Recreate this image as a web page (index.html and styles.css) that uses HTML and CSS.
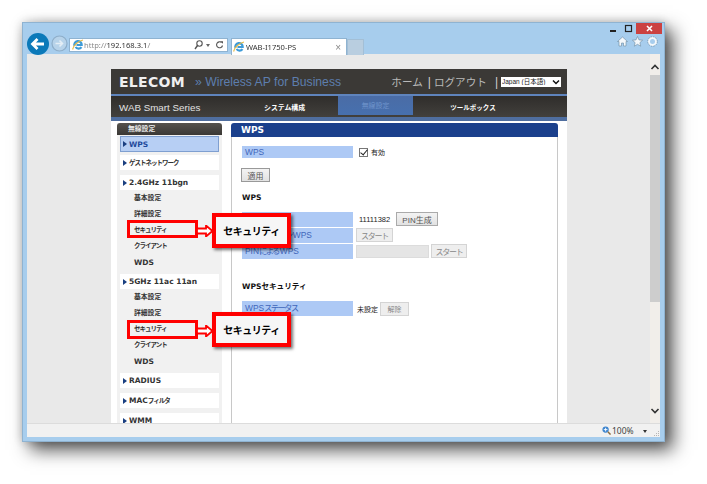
FILE: index.html
```html
<!DOCTYPE html>
<html lang="ja">
<head>
<meta charset="utf-8">
<title>WAB-I1750-PS</title>
<link rel="stylesheet" href="styles.css">
</head>
<body>
<div class="window">
  <div class="caption">
    <span class="cap-btn"><svg width="9" height="9" viewBox="0 0 9 9"><rect x="1" y="6" width="6" height="2" fill="#222"/></svg></span>
    <span class="cap-btn"><svg width="9" height="9" viewBox="0 0 9 9"><rect x="1.500" y="1.500" width="6" height="6" fill="none" stroke="#222" stroke-width="1.200"/></svg></span>
    <span class="cap-close"><svg width="9" height="9" viewBox="0 0 9 9"><path d="M2 2l5 5M7 2l-5 5" stroke="#fff" stroke-width="1.600"/></svg></span>
  </div>
  <div class="toolbar">
    <span class="back"><svg width="22" height="22" viewBox="0 0 22 22"><circle cx="11" cy="11" r="11" fill="#0b79b9"/><path d="M17 11H6M10.500 6L5.500 11l5 5" fill="none" stroke="#fff" stroke-width="2.800"/></svg></span>
    <span class="forward"><svg width="17" height="17" viewBox="0 0 17 17"><circle cx="8.500" cy="8.500" r="7.500" fill="#b7d3ea" stroke="#8eaec9" stroke-width="1.200"/><path d="M4.500 8.500h7M8.500 5.500l3 3-3 3" fill="none" stroke="#e4eef6" stroke-width="1.600"/></svg></span>
    <div class="urlbar">
      <svg class="ie" width="12" height="12" viewBox="0 0 12 12"><path d="M2.500 7a3.700 3.700 0 1 1 7.200-1H4.500M9.500 8.200A3.700 3.700 0 0 1 3.500 8" fill="none" stroke="#3d9bd8" stroke-width="2.200"/><path d="M1 10.500C0 8 6 2 11 1" fill="none" stroke="#e8b93c" stroke-width="1.200"/></svg>
      <span class="url"><span class="url-dim">http://</span>192.168.3.1<span class="url-dim">/</span></span>
      <svg class="url-tool" width="9" height="10" viewBox="0 0 9 10"><circle cx="5.500" cy="3.500" r="2.700" fill="none" stroke="#555" stroke-width="1.100"/><path d="M3.500 5.500L1 9" stroke="#555" stroke-width="1.400"/></svg>
      <span class="url-drop"></span>
      <svg class="url-tool" width="9" height="10" viewBox="0 0 9 10"><path d="M7.500 5.500a3 3 0 1 1-1-3" fill="none" stroke="#555" stroke-width="1.100"/><path d="M5 1.200h3v2.600z" fill="#555"/></svg>
    </div>
    <div class="tab">
      <svg width="12" height="12" viewBox="0 0 12 12"><path d="M2.500 7a3.700 3.700 0 1 1 7.200-1H4.500M9.500 8.200A3.700 3.700 0 0 1 3.500 8" fill="none" stroke="#3d9bd8" stroke-width="2.200"/><path d="M1 10.500C0 8 6 2 11 1" fill="none" stroke="#e8b93c" stroke-width="1.200"/></svg>
      <span class="tab-title">WAB-I1750-PS</span>
      <span class="tab-x">×</span>
    </div>
    <div class="tab-new"></div>
    <div class="tools">
      <svg width="11" height="11" viewBox="0 0 11 11"><path d="M5.500 1L.5 5.500H2V10h2.500V7h2v3H9V5.500h1.500z" fill="#f4f8fb" stroke="#6d8aa0" stroke-width=".6"/></svg>
      <svg width="11" height="11" viewBox="0 0 11 11"><path d="M5.500.5l1.500 3.400 3.600.3-2.700 2.400.8 3.600-3.200-1.900-3.200 1.900.8-3.600L.4 4.200 4 3.900z" fill="#f4f8fb" stroke="#6d8aa0" stroke-width=".6"/></svg>
      <svg width="11" height="11" viewBox="0 0 11 11"><circle cx="5.500" cy="5.500" r="3.600" fill="none" stroke="#f4f8fb" stroke-width="2.200"/><circle cx="5.500" cy="5.500" r="4.800" fill="none" stroke="#6d8aa0" stroke-width=".7" stroke-dasharray="1.500 1"/></svg>
    </div>
  </div>

  <div class="viewport">
    <div class="canvas">
      <div class="page">
        <header class="head">
          <div class="brand">
            <span class="logo">ELECOM</span>
            <span class="tagline">» Wireless AP for Business</span>
          </div>
          <div class="headlinks">
            <span>ホーム</span><span class="pipe">|</span><span>ログアウト</span><span class="pipe pipe-last">|</span>
            <span class="lang-wrap">
              <select class="lang"><option>Japan (日本語)</option></select>
              <svg class="lang-arrow" width="8" height="6" viewBox="0 0 8 6"><path d="M1 1.500l3 3 3-3" fill="none" stroke="#111" stroke-width="1.500"/></svg>
            </span>
          </div>
        </header>
        <nav class="nav">
          <span class="series">WAB Smart Series</span>
          <span class="nav-item nav-sys">システム構成</span>
          <span class="nav-item nav-active">無線設定</span>
          <span class="nav-item nav-tools">ツールボックス</span>
        </nav>
        <div class="body">
          <aside class="side">
            <div class="side-title">無線設定</div>
            <div class="side-list">
              <div class="side-row side-row-active">WPS</div>
              <div class="side-row"><span class="kana">ゲストネットワーク</span></div>
              <div class="side-group">
                <div class="side-row">2.4GHz 11bgn</div>
                <div class="sub">基本設定</div>
                <div class="sub">詳細設定</div>
                <div class="sub"><span class="kana">セキュリティ</span></div>
                <div class="sub"><span class="kana">クライアント</span></div>
                <div class="sub">WDS</div>
              </div>
              <div class="side-group">
                <div class="side-row">5GHz 11ac 11an</div>
                <div class="sub">基本設定</div>
                <div class="sub">詳細設定</div>
                <div class="sub"><span class="kana">セキュリティ</span></div>
                <div class="sub"><span class="kana">クライアント</span></div>
                <div class="sub">WDS</div>
              </div>
              <div class="side-row">RADIUS</div>
              <div class="side-row">MAC<span class="kana">フィルタ</span></div>
              <div class="side-row">WMM</div>
            </div>
          </aside>
          <main class="panel">
            <h1 class="panel-title">WPS</h1>
            <div class="panel-body">
              <div class="row">
                <span class="label label-short">WPS</span>
                <label class="check"><input type="checkbox" checked>有効</label>
              </div>
              <div class="apply"><button class="btn btn-apply">適用</button></div>
              <h2 class="section">WPS</h2>
              <div class="row row-tall">
                <span class="label">PIN<span class="label-kana">コード</span></span>
                <span class="value-pin">11111382</span>
                <button class="btn btn-pin">PIN生成</button>
              </div>
              <div class="row row-tall">
                <span class="label"><span class="label-kana">プッシュボタン</span>WPS</span>
                <button class="btn btn-off btn-start">スタート</button>
              </div>
              <div class="row row-tall">
                <span class="label">PIN<span class="label-kana">による</span>WPS</span>
                <span class="pin-input"></span>
                <button class="btn btn-off btn-start2">スタート</button>
              </div>
              <h2 class="section section-sec">WPSセキュリティ</h2>
              <div class="row row-status">
                <span class="label">WPS<span class="label-kana">ステータス</span></span>
                <span class="value-status">未設定</span>
                <button class="btn btn-off btn-clear">解除</button>
              </div>
            </div>
          </main>
        </div>
      </div>
    </div>
    <div class="scrollbar">
      <svg class="sb-arrow" width="10" height="9" viewBox="0 0 10 9"><path d="M1.500 6l3.500-3.500L8.500 6" fill="none" stroke="#333" stroke-width="1.600"/></svg>
      <div class="sb-track"><div class="sb-thumb"></div></div>
      <svg class="sb-arrow" width="10" height="9" viewBox="0 0 10 9"><path d="M1.500 3l3.500 3.500L8.500 3" fill="none" stroke="#333" stroke-width="1.600"/></svg>
    </div>
  </div>

  <footer class="status">
    <svg width="9" height="9" viewBox="0 0 10 10"><circle cx="4" cy="4" r="3.500" fill="#3f86cf"/><path d="M2 4h4M4 2v4" stroke="#fff"/><path d="M6.500 6.500L9.500 9.500" stroke="#8a6a3c" stroke-width="1.600"/></svg>
    <span class="zoom-val">100%</span>
    <span class="zoom-drop"></span>
    <svg class="grip" width="5" height="5" viewBox="0 0 5 5"><path d="M4 0h1v1H4zM2 2h1v1H2zM4 2h1v1H4zM0 4h1v1H0zM2 4h1v1H2zM4 4h1v1H4z" fill="#b5b5b5"/></svg>
  </footer>

  <div class="mark mark-a"></div>
  <svg class="arrow arrow-a" width="16" height="12" viewBox="0 0 16 12"><path d="M0 3.500h9V.5L15.500 6 9 11.500v-3H0z" fill="#fff" stroke="#f00" stroke-width="1.800"/></svg>
  <div class="callout callout-a">セキュリティ</div>
  <div class="mark mark-b"></div>
  <svg class="arrow arrow-b" width="16" height="12" viewBox="0 0 16 12"><path d="M0 3.500h9V.5L15.500 6 9 11.500v-3H0z" fill="#fff" stroke="#f00" stroke-width="1.800"/></svg>
  <div class="callout callout-b">セキュリティ</div>
</div>
</body>
</html>
```
FILE: styles.css
```css
* { box-sizing: border-box; }
html, body { margin: 0; padding: 0; background: #fff; }
body { width: 707px; height: 484px; overflow: hidden; padding: 22px 0 0 22px; font-family: "Liberation Sans", "Noto Sans CJK JP", sans-serif; }

.window {
  position: relative;
  width: 643px;
  height: 420px;
  background: #a7cded;
  border: 1px solid #8fb3d1;
  padding: 0 4px 4px 4px;
  display: flex;
  flex-direction: column;
  box-shadow: 8px 8px 17px rgba(0,0,0,.68), 0 0 10px rgba(0,0,0,.2);
  filter: blur(.3px);
}

.caption { height: 11px; display: flex; justify-content: flex-end; align-items: flex-start; margin-right: -2px; }
.cap-btn { width: 15px; height: 11px; display: flex; align-items: center; justify-content: center; }
.cap-close { width: 26px; height: 11px; background: #cb4241; display: flex; align-items: center; justify-content: center; }

.toolbar { height: 20px; display: flex; align-items: flex-start; position: relative; margin-left: -1px; }
.back { width: 22px; height: 22px; margin-top: -1px; margin-left: 1px; flex: none; }
.back svg, .forward svg { display: block; }
.forward { width: 17px; height: 17px; margin: 1px 0 0 2px; flex: none; }
.urlbar { width: 159px; height: 14px; margin: 4px 0 0 1px; background: #fff; border: 1px solid #8fb3d1; display: flex; align-items: center; padding: 0 3px 0 2px; gap: 3px; flex: none; }
.url { flex: 1; font: 7.6px "Noto Sans", sans-serif; color: #333; margin-left: -3px; white-space: nowrap; }
.url-dim { color: #8a8a8a; }
.url-tool { flex: none; }
.url-drop { width: 0; height: 0; border: 2px solid transparent; border-top: 3px solid #666; margin-top: 3px; margin-right: 2px; }
.tab { width: 116px; height: 17px; margin: 4px 0 0 3px; background: #fff; border: 1px solid #8fb3d1; border-bottom: 0; display: flex; align-items: center; padding: 0 5px 0 1px; gap: 1px; flex: none; }
.tab-title { flex: 1; font: 7.6px "Noto Sans", sans-serif; color: #333; }
.tab-x { font: 10px "Liberation Sans", sans-serif; color: #888; }
.tab-new { width: 17px; height: 16px; margin-top: 5px; background: #b9cee0; border: 1px solid #a3bfd6; border-bottom: 0; flex: none; }
.tools { position: absolute; right: 2px; top: 2px; display: flex; gap: 4px; }
.tools svg { display: block; }

.viewport { flex: 1; display: flex; min-height: 0; background: #ececec; }
.canvas { flex: 1; min-width: 0; overflow: hidden; padding: 15px 0 0 84px; background: #e9e9e9; }
.page { width: 456px; height: 354px; background: #fff; }

.head { height: 27px; background: #3b3936; border-bottom: 2px solid #5f84bd; display: flex; align-items: center; justify-content: space-between; padding: 0 6px 0 8px; }
.brand { display: flex; align-items: center; }
.logo { font: bold 14px "DejaVu Sans", sans-serif; color: #f0f0f0; width: 65px; letter-spacing: .3px; }
.tagline { font: 12.2px "Liberation Sans", sans-serif; color: #5d7eae; margin-left: 11px; white-space: nowrap; }
.headlinks { display: flex; align-items: center; font-size: 10.6px; color: #b9b9b9; white-space: nowrap; }
.pipe { margin: 0 3px 0 5px; color: #d0d0d0; font-size: 12px; }
.pipe-last { margin: 0 1px 0 8px; }
.lang-wrap { position: relative; display: block; width: 60px; height: 10px; margin-left: 2px; }
.lang { appearance: none; display: block; width: 60px; height: 10px; font: 6.5px "Liberation Sans", "Noto Sans CJK JP", sans-serif; padding: 0 0 0 1px; border: 0; background: #fff; color: #222; }
.lang-arrow { position: absolute; right: 1px; top: 2px; }

.nav { height: 25px; position: relative; display: flex; align-items: center; background: linear-gradient(#2f2d2b, #43413d); border-bottom: 3px solid #4f6e9f; box-shadow: inset 0 -1px 0 #4f6e9f; }
.series { font-size: 9.8px; color: #e2e2e2; margin-left: 8px; width: 145px; }
.nav-item { font-size: 6.9px; font-weight: bold; color: #fff; text-align: center; white-space: nowrap; }
.nav-sys { width: 41px; }
.nav-active { width: 75px; margin-left: 33px; height: 19px; line-height: 19px; margin-top: -3px; background: linear-gradient(#4a6ca6, #4770ae); color: #6f94cb; font-weight: normal; }
.nav-tools { width: 46px; margin-left: 37px; font-size: 6.5px; }

.body { display: flex; padding: 2px 9px 0 6px; height: 303px; overflow: hidden; }

.side { width: 105px; height: 320px; background: #f1f1f1; flex: none; }
.side-title { height: 12px; line-height: 11px; padding-left: 11px; border-radius: 3px 3px 0 0; background: linear-gradient(#55524d, #3a3835); color: #e6e6e6; font-size: 6.800px; font-weight: bold; }
.side-list { display: flex; flex-direction: column; gap: 5px; margin-top: 1px; padding: 0 3px; }
.side-group { margin-bottom: -1px; }
.side-row { height: 15px; background: #fff; padding-left: 9px; font: bold 7.5px/16px "DejaVu Sans", "Noto Sans CJK JP", sans-serif; color: #333; position: relative; white-space: nowrap; }
.side-row::before { content: ""; position: absolute; left: 3px; top: 4.500px; border: 3px solid transparent; border-left: 4px solid #1a3f80; border-right: 0; }
.side-row-active { height: 16px; margin-bottom: -2px; background: #b7cff4; border: 1px solid #7f9fd0; color: #1f4a9c; padding-left: 8px; line-height: 15px; }
.side-row-active::before { left: 2px; top: 3.500px; }
.sub { height: 16px; padding-left: 14px; font: bold 6.800px/17px "DejaVu Sans", "Noto Sans CJK JP", sans-serif; color: #333; white-space: nowrap; }
.sub:last-child { font-size: 7.5px; }
.kana { font-size: 6.500px; letter-spacing: -1px; }

.panel { width: 327px; margin-left: 9px; flex: none; }
.panel-title { margin: 0; height: 14px; background: #1b408c; color: #fff; font: bold 9px/14px "DejaVu Sans", sans-serif; padding-left: 10px; border-radius: 3px 3px 0 0; }
.panel-body { height: 320px; border: 1px solid #c8c8c8; border-top: 0; padding: 9px 0 0 10px; background: #fff; }

.row { display: flex; align-items: center; }
.row-tall { height: 16px; }
.label { width: 111px; height: 15px; line-height: 15px; padding-left: 3px; background: #adc9f5; color: #3f66ba; font-size: 8.4px; white-space: nowrap; flex: none; }
.label-kana { letter-spacing: -1.700px; margin-right: 1px; }
.label-short { height: 12px; line-height: 12px; }
.check { display: flex; align-items: center; font-size: 7px; color: #222; margin-left: 6px; }
.check input { appearance: none; position: relative; width: 9px; height: 9px; margin: 0 3px 0 0; border: 1px solid #777; background: #fff; }
.check input::before { content: ""; position: absolute; left: 2px; top: -1px; width: 3px; height: 6px; border: solid #222; border-width: 0 1.500px 1.500px 0; transform: rotate(40deg); }
.apply { margin-top: 10px; height: 14px; }
.btn { height: 14px; padding: 0; border: 1px solid #bcbcbc; background: linear-gradient(#f3f3f3, #e2e2e2); font: 8px "Liberation Sans", "Noto Sans CJK JP", sans-serif; color: #555; display: block; flex: none; white-space: nowrap; }
.btn-apply { width: 29px; margin-left: -1px; border-color: #999; }
.section { margin: 10px 0 8px; height: 11px; font: bold 7.600px/11px "DejaVu Sans", "Noto Sans CJK JP", sans-serif; color: #111; }
.value-pin { font-size: 7.5px; color: #222; margin-left: 6px; width: 37px; }
.btn-pin { width: 42px; border-color: #aaa; }
.btn-off { background: #eee; color: #888; border-color: #d4d4d4; letter-spacing: -1.300px; }
.btn-start { width: 37px; margin-left: 3px; }
.pin-input { width: 73px; height: 13px; margin-left: 3px; background: #e5e5e5; border: 1px solid #dcdcdc; }
.btn-start2 { width: 36px; margin-left: 2px; }
.section-sec { margin-top: 22px; margin-bottom: 9px; }
.row-status { height: 15px; }
.value-status { font-size: 7px; color: #222; margin-left: 4px; width: 23px; white-space: nowrap; }
.btn-clear { width: 29px; font-size: 7px; letter-spacing: 0; }

.scrollbar { width: 10px; flex: none; display: flex; flex-direction: column; background: #f1eeea; }
.sb-arrow { display: block; margin-top: 9px; flex: none; }
.sb-track { flex: 1; min-height: 0; margin-top: 3px; }
.sb-thumb { height: 227px; background: #cdcdcd; }
.scrollbar .sb-arrow:last-child { margin: 0 0 8px; }

.status { position: relative; height: 14px; background: #f1f1f1; border-top: 1px solid #dcdcdc; display: flex; align-items: center; justify-content: flex-end; padding-right: 13px; font: 8.5px "Noto Sans", sans-serif; color: #444; }
.zoom-val { margin-left: 1px; width: 31px; }
.zoom-drop { width: 0; height: 0; border: 2.500px solid transparent; border-top: 3px solid #333; margin-top: 3px; }
.grip { position: absolute; right: 1px; bottom: 1px; }

.mark { position: absolute; width: 71px; height: 18px; border: 3px solid #f00; }
.mark-a { left: 104px; top: 197px; }
.mark-b { left: 104px; top: 297px; height: 19px; }
.arrow { position: absolute; left: 174px; }
.arrow-a { top: 202px; }
.arrow-b { top: 302px; }
.callout { position: absolute; left: 189px; width: 79px; height: 35px; border: 4px solid #f00; background: #f6f6f6; font: bold 10px/27px "Noto Sans CJK JP", sans-serif; letter-spacing: -.5px; color: #000; text-align: center; box-shadow: 2px 2px 3px rgba(0,0,0,.55); }
.callout-a { top: 190px; }
.callout-b { top: 289px; }
```
